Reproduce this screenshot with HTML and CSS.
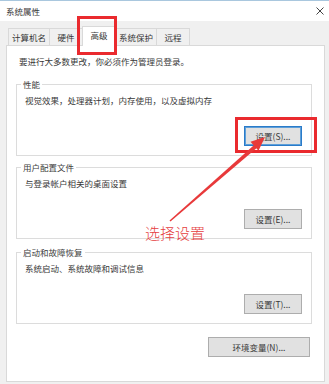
FILE: index.html
```html
<!DOCTYPE html>
<html lang="zh-CN">

<head>
    <meta charset="UTF-8">
    <title>系统属性</title>
    <link rel="stylesheet" href="styles.css">
</head>

<body>
    <div class="window">
        <div class="titlebar">
            <span class="title">系统属性</span>
            <svg class="close" width="8" height="8" viewBox="0 0 8 8">
                <path d="M0.5 0.5 L7.5 7.5 M7.5 0.5 L0.5 7.5" stroke="#444" stroke-width="1" fill="none" />
            </svg>
        </div>

        <div class="tabs">
            <div class="tab">计算机名</div>
            <div class="tab">硬件</div>
            <div class="tab tab-active">高级<span class="mark mark-tab"></span></div>
            <div class="tab">系统保护</div>
            <div class="tab">远程</div>
        </div>

        <div class="panel">
            <p class="intro">要进行大多数更改，你必须作为管理员登录。</p>

            <div class="group">
                <div class="group-title">性能</div>
                <div class="group-desc">视觉效果，处理器计划，内存使用，以及虚拟内存</div>
                <button class="btn btn-focus">设置(S)...<span class="mark mark-btn"></span></button>
            </div>

            <div class="group group-2">
                <div class="group-title">用户配置文件</div>
                <div class="group-desc">与登录帐户相关的桌面设置</div>
                <button class="btn">设置(E)...</button>
            </div>

            <div class="group group-3">
                <div class="group-title">启动和故障恢复</div>
                <div class="group-desc">系统启动、系统故障和调试信息</div>
                <button class="btn">设置(T)...</button>
            </div>

            <button class="btn btn-wide">环境变量(N)...</button>
        </div>

        <svg class="arrow" width="329" height="384" viewBox="0 0 329 384">
            <polygon points="170.5,221.5 169.5,220.5 254.7,144.5 257.3,147.5" fill="#e8393a" />
            <polygon points="265,137 258.5,150.8 250.5,141.8" fill="#e8393a" />
        </svg>
        <div class="note">选择设置</div>
    </div>
</body>

</html>
```

FILE: styles.css
```css
* {
    box-sizing: border-box;
}

body {
    margin: 0;
    font-family: "Noto Sans CJK SC", "Microsoft YaHei", sans-serif;
    font-size: 8.5px;
    color: #383838;
}

.window {
    position: relative;
    width: 329px;
    height: 384px;
    background: #f0f0f0;
    display: flex;
    flex-direction: column;
    overflow: hidden;
}

.titlebar {
    height: 21px;
    border-top: 1px solid #a9c7de;
    background: #fff;
    display: flex;
    align-items: center;
    justify-content: space-between;
    padding: 0 5px 0 6px;
}

.title {
    line-height: 12px;
}

.tabs {
    display: flex;
    align-items: flex-end;
    height: 18px;
    margin: 6px 0 0 8px;
}

.tab {
    height: 17px;
    min-width: 34px;
    padding: 0 3px;
    margin-right: -1px;
    border: 1px solid #d9d9d9;
    border-bottom: none;
    background: #f0f0f0;
    line-height: 16px;
    text-align: center;
    white-space: nowrap;
}

.tab-active {
    position: relative;
    z-index: 2;
    height: 20px;
    margin-bottom: -1px;
    background: #fff;
    line-height: 17px;
}

.panel {
    flex: 1;
    margin: 0 4px 2px 6px;
    padding: 0 12px 0 9px;
    border: 1px solid #d9d9d9;
    background: #fff;
    display: flex;
    flex-direction: column;
}

.intro {
    margin: 9px 0 0 3px;
    line-height: 12px;
}

.group {
    height: 72px;
    margin-top: 17px;
    padding: 0 9px 9px 8px;
    border: 1px solid #dcdcdc;
    display: flex;
    flex-direction: column;
}

.group-2 {
    margin-top: 11px;
}

.group-3 {
    margin-top: 13px;
}

.group-title {
    align-self: flex-start;
    margin: -7px 0 0 -4px;
    padding: 0 2px;
    background: #fff;
    line-height: 12px;
    color: #404040;
}

.group-desc {
    margin-top: 4px;
    line-height: 12px;
}

.btn {
    position: relative;
    align-self: flex-end;
    margin-top: auto;
    width: 58px;
    height: 20px;
    padding: 0;
    border: 1px solid #adadad;
    background: #e1e1e1;
    font-family: inherit;
    font-size: 8.5px;
    color: #383838;
}

.btn-focus {
    border-color: #2a7bc9;
    box-shadow: inset 0 0 0 1px #5e9fd9;
}

.btn-wide {
    width: 102px;
    margin: 13px 2px 0 0;
}

.mark {
    position: absolute;
    border: 3px solid #ea2a2e;
    pointer-events: none;
}

.mark-tab {
    left: -6px;
    top: -11px;
    width: 40px;
    height: 39px;
}

.mark-btn {
    left: -10px;
    top: -10px;
    width: 82px;
    height: 36px;
}

.arrow {
    position: absolute;
    left: 0;
    top: 0;
    pointer-events: none;
}

.note {
    position: absolute;
    left: 145px;
    top: 223px;
    font-size: 15px;
    line-height: 20px;
    font-weight: 300;
    color: #e5403f;
}
```
